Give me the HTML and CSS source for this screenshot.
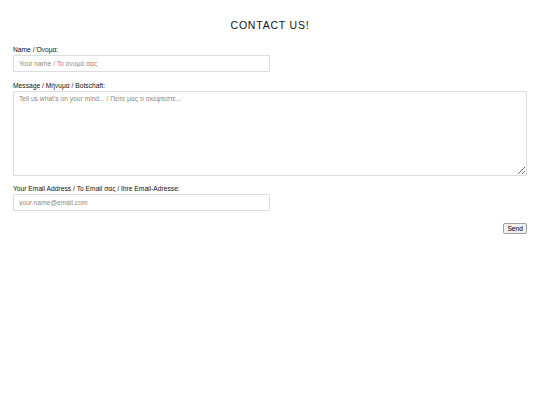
FILE: index.html
```html
<!DOCTYPE html>
<html lang="en">
<head>
    <meta charset="UTF-8">
    <meta name="viewport" content="width=device-width, initial-scale=1.0">
    <title>Contact Us</title>
    <link rel="stylesheet" href="styles.css">
</head>
<body>
    <div class="contact">
        <h1>CONTACT US!</h1>

        <form class="contact-form">
            <div class="field">
                <label for="name">Name / Όνομα:</label>
                <input type="text" id="name" class="half" placeholder="Your name / Το ονομά σας">
            </div>

            <div class="field">
                <label for="message">Message / Μήνυμα / Botschaft:</label>
                <textarea id="message" placeholder="Tell us what's on your mind... / Πείτε μας τι σκέφτεστε..."></textarea>
            </div>

            <div class="field">
                <label for="email">Your Email Address / Το Email σας / Ihre Email-Adresse:</label>
                <input type="email" id="email" class="half" placeholder="your.name@email.com">
            </div>

            <div class="actions">
                <button type="submit" class="btn">Send</button>
            </div>
        </form>
    </div>
</body>
</html>
```

FILE: styles.css
```css
body {
    font-family: "Liberation Sans", Arial, sans-serif;
    margin: 0;
    padding: 0;
    color: #000;
    background-color: #fff;
}

.contact {
    padding: 0 13px;
}

h1 {
    margin: 0;
    padding-top: 19px;
    padding-bottom: 14px;
    text-align: center;
    font-size: 10.5px;
    font-weight: normal;
    letter-spacing: 0.8px;
    line-height: 13px;
    color: #111;
}

.contact-form {
    display: flex;
    flex-direction: column;
    gap: 9.5px;
}

.field {
    display: flex;
    flex-direction: column;
    gap: 1px;
}

label {
    font-size: 6.7px;
    line-height: 8px;
    color: #111;
}

input,
textarea {
    font-family: "Liberation Sans", Arial, sans-serif;
    font-size: 6.7px;
    box-sizing: border-box;
    border: 1px solid #ddd;
    border-radius: 1px;
    padding: 0 5px;
    margin: 0;
    color: #333;
    outline: none;
}

input::placeholder,
textarea::placeholder {
    color: #8a8a8a;
}

.half {
    width: 257px;
    height: 17px;
}

textarea {
    width: 514px;
    height: 85px;
    padding-top: 3px;
    resize: vertical;
}

.actions {
    display: flex;
    justify-content: flex-end;
    padding-top: 2px;
}

.btn {
    font-family: "Liberation Sans", Arial, sans-serif;
    font-size: 6.7px;
    padding: 1px 3px;
    height: 11px;
    line-height: 7px;
    background-color: #f0f0f0;
    border: 1px solid #a0a0a0;
    border-radius: 2px;
    color: #000;
}
```
